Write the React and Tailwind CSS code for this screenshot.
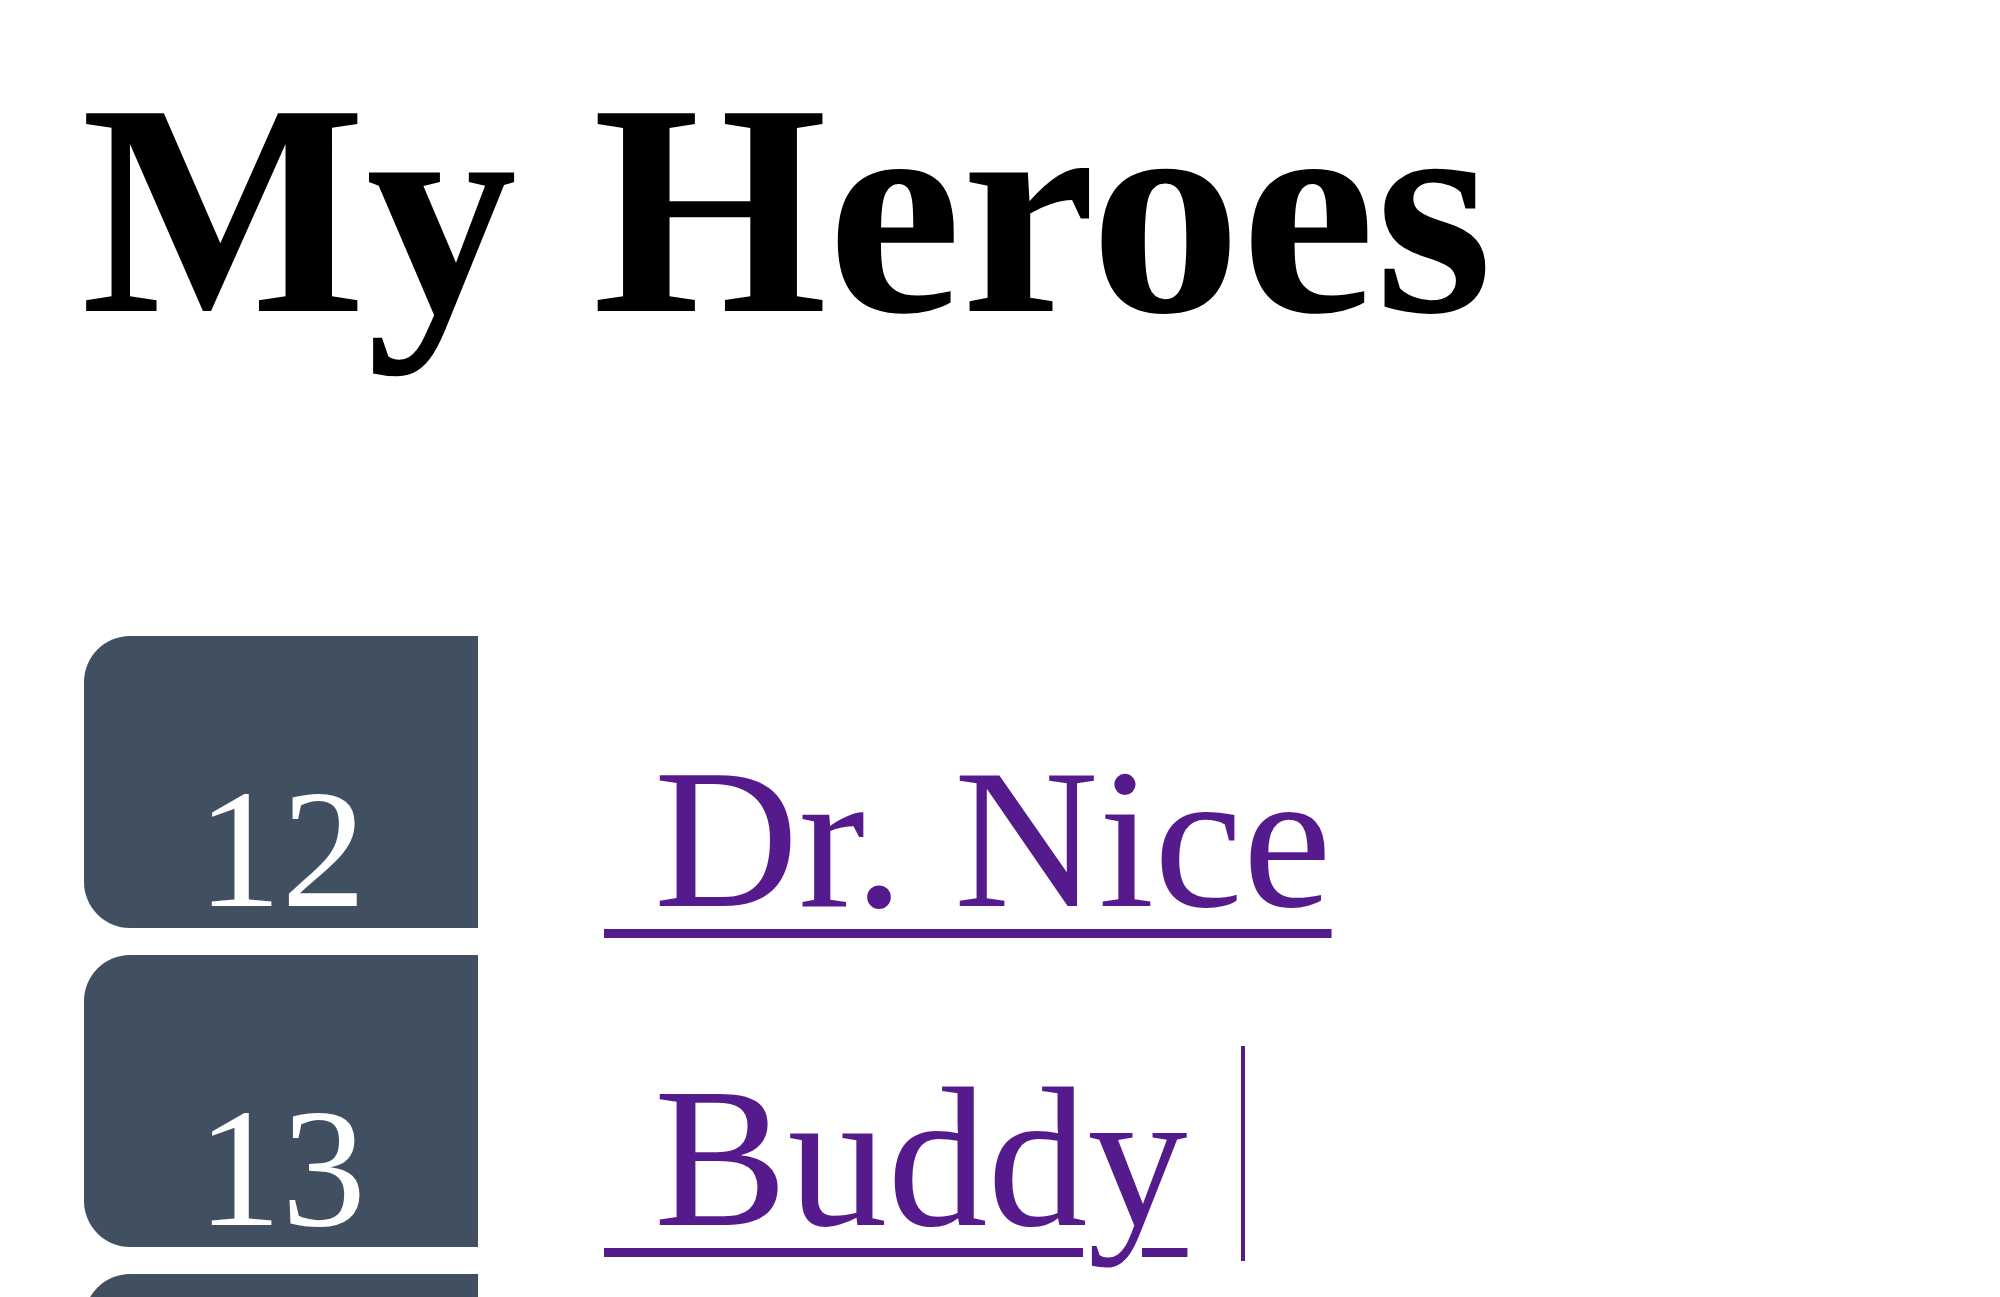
import React from "react";

const heroes = [
  { id: 12, name: "Dr. Nice" },
  { id: 13, name: "Buddy", caret: true },
  { id: 14, name: "" },
];

export default function App() {
  return (
    <div className="h-screen bg-white overflow-hidden font-['Liberation_Serif','Times_New_Roman',serif] text-black">
      <h1 className="pt-[58px] pl-[81px] text-[302px] leading-none font-bold whitespace-nowrap">
        My Heroes
      </h1>
      <ul className="mt-[276px] flex flex-col gap-[27px] pl-[84px]">
        {heroes.map((h) => (
          <li key={h.id} className="flex items-start h-[292px]">
            <span className="w-[394px] h-[292px] shrink-0 bg-[#405061] rounded-l-[46px] text-white text-[169px] leading-none pt-[129px] pl-[113px] whitespace-nowrap">
              {h.name ? h.id : ""}
            </span>
            {h.name && (
              <a className="ml-[126px] mt-[103px] text-[200px] leading-none text-[#551a8b] underline decoration-[9px] underline-offset-[23px] whitespace-pre">
                {" " + h.name}
              </a>
            )}
            {h.caret && (
              <span className="ml-[54px] mt-[91px] w-[4px] h-[215px] shrink-0 bg-[#551a8b]" />
            )}
          </li>
        ))}
      </ul>
    </div>
  );
}
